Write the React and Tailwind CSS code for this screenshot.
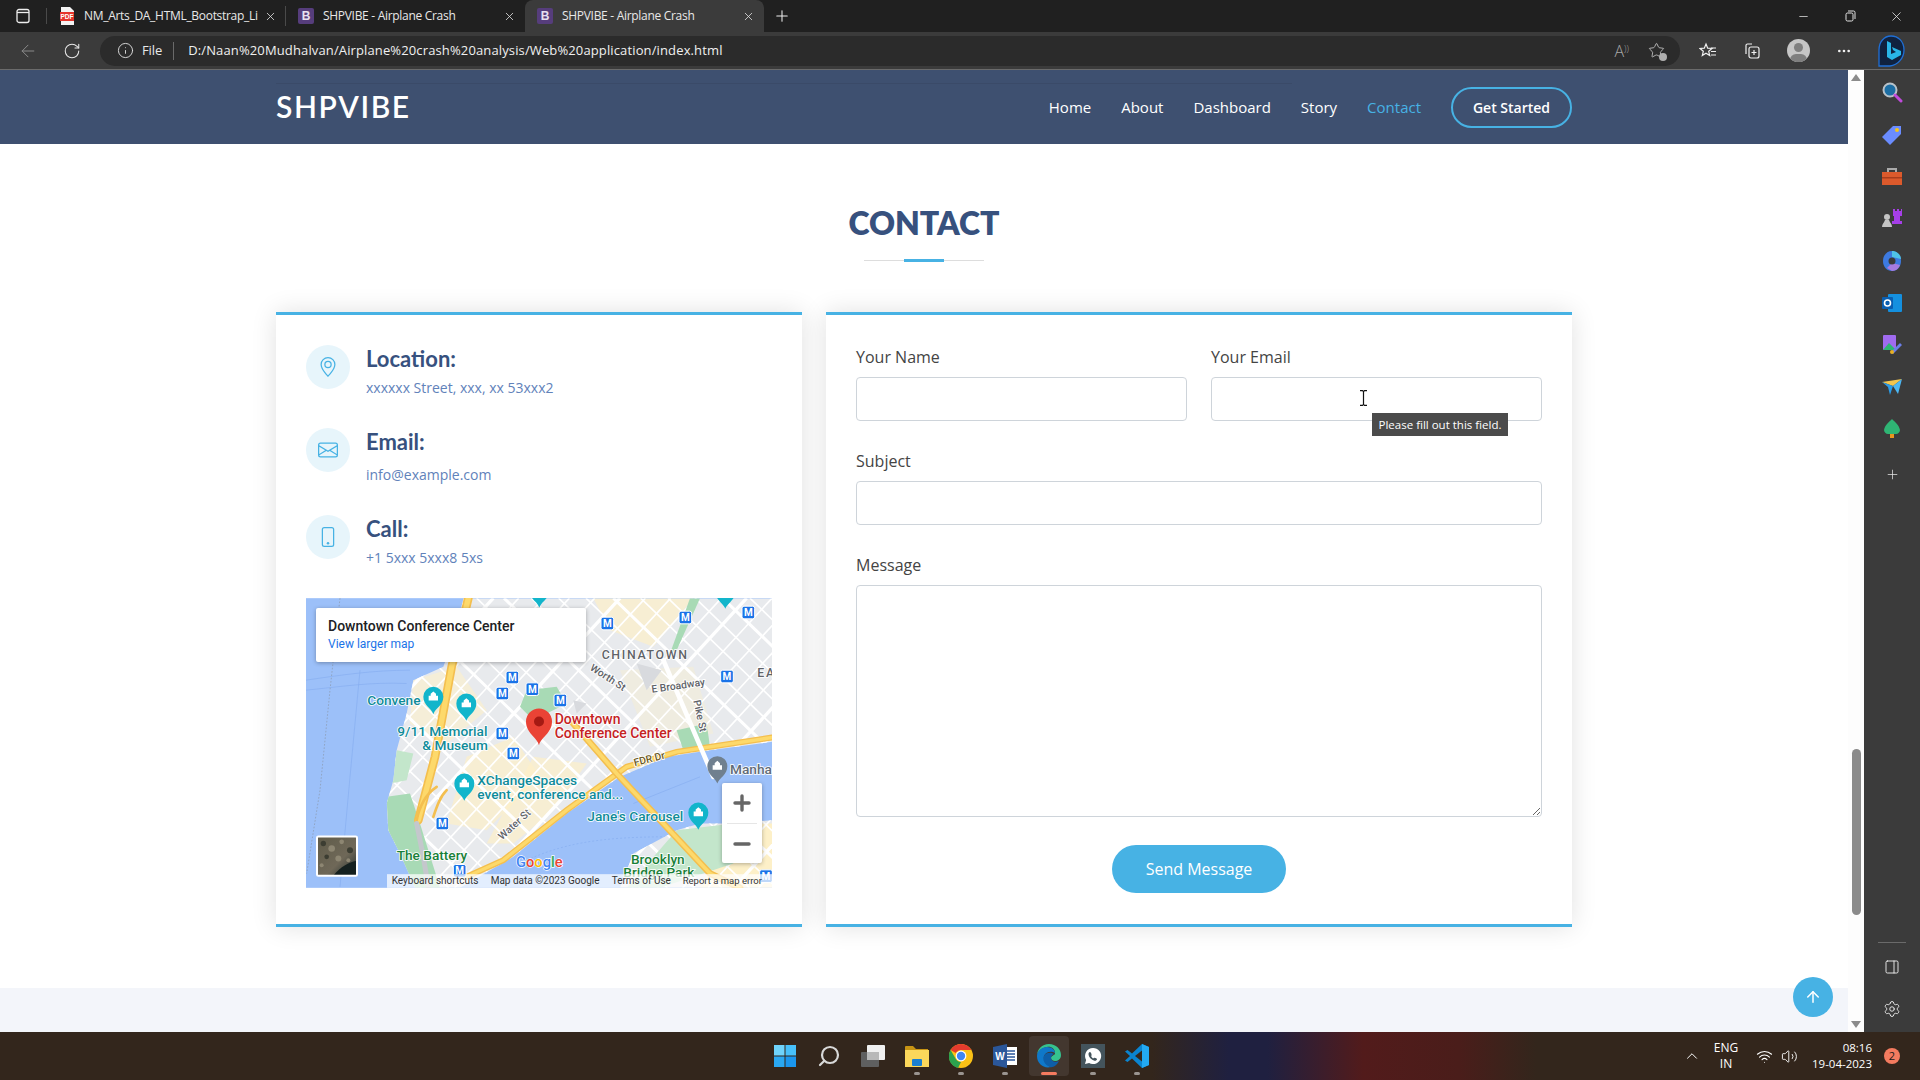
import React from 'react';
import { ArrowLeft, RotateCw, Info, X, Plus, Minus, PanelRight, Settings, ChevronUp, ArrowUp, Wifi, Volume2, MoreHorizontal, Star, Search } from 'lucide-react';
import { BsGeoAlt, BsEnvelope, BsPhone } from 'react-icons/bs';

const NAV = ['Home', 'About', 'Dashboard', 'Story', 'Contact'];

const METRO = [[922, 100], [1156, 82], [1345, 67], [637, 262], [607, 310], [697, 297], [781, 331], [1281, 259], [607, 430], [640, 490], [427, 700], [479, 842], [1398, 858]];

// street grid for the map, in crop coordinates
const STREETS_A = Array.from({ length: 26 }, (_, i) => {
  const o = -700 + i * 82;
  return { d: `M${o} 24L${o + 900} 893`, w: i % 4 === 0 ? 9 : 5 };
});
const STREETS_B = Array.from({ length: 28 }, (_, i) => {
  const o = 200 + i * 76;
  return { d: `M${o} 24L${o - 800} 893`, w: i % 5 === 0 ? 10 : 5 };
});

const SATELLITE_SPOTS = [[70, 760, 8], [95, 775, 10], [125, 755, 7], [150, 780, 9], [80, 800, 7], [115, 805, 9], [145, 810, 6], [65, 825, 6]];

function BrowserTab({ icon, title, active, divider }) {
  return (
    <div className={`relative flex h-[32px] w-[239px] shrink-0 items-center ${active ? 'rounded-t-lg bg-[#3b3b3b]' : ''}`}>
      <div className="ml-[12px] flex w-[16px] justify-center">{icon}</div>
      <span className="ml-[9px] w-[176px] truncate font-['Open_Sans',sans-serif] text-[12px] tracking-[-0.3px] text-[#e8e8e8]">{title}</span>
      <X size={13} strokeWidth={1.5} className="absolute right-[9px] text-[#e0e0e0]" />
      {divider && <span className="absolute right-0 h-[20px] w-px bg-[#4a4a4a]" />}
    </div>
  );
}

function BootstrapBadge() {
  return (
    <span className="flex h-[16px] w-[16px] items-center justify-center rounded-[2px] bg-[#563d7c] font-['Liberation_Sans',sans-serif] text-[12px] font-bold leading-none text-[#e8e0f0]">B</span>
  );
}

function PdfBadge() {
  return (
    <svg width="16" height="18" viewBox="0 0 16 18">
      <path d="M2 0h9l4 4v14H2z" fill="#f3f3f3" />
      <rect x="1" y="5" width="14" height="9" fill="#e5342b" />
      <text x="8" y="12" fontSize="6.5" fontWeight="700" textAnchor="middle" fill="#fff" fontFamily="Liberation Sans">PDF</text>
    </svg>
  );
}

function TabBar() {
  return (
    <div className="flex h-[32px] shrink-0 items-center bg-[#202020]">
      <div className="flex w-[47px] shrink-0 justify-center border-r border-[#4a4a4a]">
        <svg width="16" height="16" viewBox="0 0 16 16" fill="none" stroke="#eee" strokeWidth="1.3"><rect x="2" y="1.5" width="12" height="13" rx="2" /><path d="M2 4.500h12" /></svg>
      </div>
      <BrowserTab divider icon={<PdfBadge />} title="NM_Arts_DA_HTML_Bootstrap_Li" />
      <BrowserTab icon={<BootstrapBadge />} title="SHPVIBE - Airplane Crash" />
      <BrowserTab active icon={<BootstrapBadge />} title="SHPVIBE - Airplane Crash" />
      <Plus size={18} strokeWidth={1.4} className="ml-[9px] text-[#eee]" />
      <div className="ml-auto flex items-center text-[#e4e4e4]">
        <Minus size={13} strokeWidth={1.4} className="mr-[35px]" />
        <svg width="11" height="12" viewBox="0 0 11 12" fill="none" stroke="currentColor" strokeWidth="1" className="mr-[33px]"><rect x="1" y="3" width="7" height="8" rx="1.5" /><path d="M3 1h5.500A1.500 1.500 0 0 1 10 2.500V9" /></svg>
        <X size={15} strokeWidth={1.3} className="mr-[16px]" />
      </div>
    </div>
  );
}

function AddressBar() {
  return (
    <div className="relative flex h-[38px] shrink-0 items-center border-b border-[#6b6b6b] bg-[#3b3b3b]">
      <ArrowLeft size={20} strokeWidth={1.2} className="ml-[18px] text-[#8a8a8a]" />
      <RotateCw size={18} strokeWidth={1.4} className="ml-[25px] text-[#e8e8e8]" />
      <div className="ml-[19px] flex h-[30px] w-[1580px] items-center rounded-full bg-[#2b2b2b]">
        <Info size={17} strokeWidth={1.3} className="ml-[17px] text-[#e0e0e0]" />
        <span className="ml-[8px] font-['Open_Sans',sans-serif] text-[13px] tracking-[-0.1px] text-[#e8e8e8]">File</span>
        <span className="ml-[11px] h-[18px] w-px bg-[#6a6a6a]" />
        <span className="ml-[14px] font-['Open_Sans',sans-serif] text-[13px] tracking-[0.13px] text-[#f0f0f0]">D:/Naan%20Mudhalvan/Airplane%20crash%20analysis/Web%20application/index.html</span>
        <span className="ml-auto font-['Open_Sans',sans-serif] text-[16px] font-light leading-none text-[#a8a8a8]">A<sup className="text-[9px]">))</sup></span>
        <span className="relative ml-[19px] mr-[15px]">
          <Star size={17} strokeWidth={1.2} className="text-[#c8c8c8]" />
          <span className="absolute -bottom-[2px] -right-[2px] h-[8px] w-[8px] rounded-full bg-[#b0b0b0]" />
        </span>
      </div>
      {/* favourites */}
      <svg width="18" height="18" viewBox="0 0 18 18" className="ml-[19px]" fill="none" stroke="#f0f0f0" strokeWidth="1.2"><path d="M7 2l1.700 4.200 4.300.3-3.300 2.800 1 4.300L7 11.300 3.300 13.600l1-4.300L1 6.500l4.300-.3z" /><path d="M12 6h5M12 9.500h5M12 13h5" /></svg>
      {/* collections */}
      <svg width="18" height="18" viewBox="0 0 18 18" className="ml-[26px]" fill="none" stroke="#f0f0f0" strokeWidth="1.2"><path d="M3 12V3.500A1.500 1.500 0 0 1 4.500 2H9" /><rect x="6" y="5" width="10" height="11" rx="2" /><path d="M11 8v5M8.500 10.500h5" /></svg>
      <div className="relative ml-[26px] h-[23px] w-[23px] overflow-hidden rounded-full bg-[#c6c6c6]">
        <span className="absolute left-[7px] top-[4px] h-[9px] w-[9px] rounded-full bg-[#7f7f7f]" />
        <span className="absolute left-[3px] top-[15px] h-[12px] w-[17px] rounded-full bg-[#7f7f7f]" />
      </div>
      <MoreHorizontal size={16} className="ml-[26px] text-[#f0f0f0]" />
      <svg width="30" height="36" viewBox="0 0 30 36" className="ml-[24px] mt-[2px]">
        <path d="M15 2c7 0 13 5 13 14 0 8-6 15-14 16H3V16C3 8 8 2 15 2z" fill="#10223f" stroke="#1f6fd6" strokeWidth="1.3" />
        <path d="M11 7l4 2v11l5-2-3-2-1-3 9 4v4l-9 5-5-3z" fill="#29b6e8" />
      </svg>
    </div>
  );
}

function NavBar() {
  return (
    <header className="relative h-[74px] shrink-0 bg-[#3e5070]">
      <div className="absolute left-[276px] top-[13px] h-px w-[1016px] bg-[#3a4a68]" />
      <div className="mx-auto flex h-full w-[1296px] items-center">
        <span className="mb-[2px] font-['Lato',sans-serif] text-[30px] font-semibold tracking-[1.6px] text-white">SHPVIBE</span>
        <nav className="ml-auto flex items-center gap-[30px] font-['Open_Sans',sans-serif] text-[15px] font-medium text-white">
          {NAV.map((item) => (
            <a key={item} className={item === 'Contact' ? 'text-[#47b2e4]' : ''}>{item}</a>
          ))}
          <a className="flex h-[41px] w-[121px] items-center justify-center rounded-full border-2 border-[#47b2e4] text-[14px] font-semibold">Get Started</a>
        </nav>
      </div>
    </header>
  );
}

function MetroBadge({ x, y }) {
  return (
    <g>
      <rect x={x - 19} y={y - 19} width="38" height="38" rx="6" fill="#1a73e8" stroke="#fff" strokeWidth="3" />
      <text x={x} y={y + 11} fontSize="30" fontWeight="700" textAnchor="middle" fill="#fff">M</text>
    </g>
  );
}

function PoiPin({ x, y, color = '#12b5cb' }) {
  return (
    <g>
      <path d={`M${x} ${y + 54}c-6-18-30-26-30-52a30 30 0 0 1 60 0c0 26-24 34-30 52z`} fill={color} />
      <path d={`M${x - 14} ${y + 13}v-14h6v-6l8-7 8 7v6h6v14z`} fill="#fff" />
    </g>
  );
}

function MapLabel({ x, y, children, color = '#0f8b99', size = 41, ...rest }) {
  return (
    <text x={x} y={y} fontSize={size} fill={color} stroke="#fff" strokeWidth="5" paintOrder="stroke" fontWeight="500" {...rest}>{children}</text>
  );
}

function MapDrawing() {
  return (
    <svg viewBox="18 24 1398 869" className="block h-[290px] w-[466px]" fontFamily="Roboto, sans-serif">
      <defs>
        <clipPath id="land">
          <path d="M490 24L470 120L430 230L340 270L320 370L290 480L280 570L260 640L265 720L300 790L345 893H480L640 800L800 670L960 560L1100 500L1230 480L1416 455V24Z" />
          <path d="M1416 690L1290 700L1200 700L1130 720L1000 790L960 893H1416Z" />
        </clipPath>
        <clipPath id="thumb"><rect x="51" y="739" width="120" height="118" rx="4" /></clipPath>
        <linearGradient id="aerial" x1="0" y1="0" x2="1" y2="1">
          <stop offset="0" stopColor="#5f5b49" />
          <stop offset="0.6" stopColor="#6f6858" />
          <stop offset="1" stopColor="#1d2a2a" />
        </linearGradient>
      </defs>
      <rect x="18" y="24" width="1398" height="869" fill="#9cc0f9" />
      <g stroke="#86aef0" strokeWidth="2" fill="none">
        <path d="M120 24L90 300L60 600L20 850" strokeDasharray="5 5" stroke="#8a97ab" />
        <path d="M18 270C120 255 220 240 330 240" />
        <path d="M18 300C120 290 210 275 320 280" />
        <path d="M180 240L150 560L120 890" />
        <path d="M660 820C780 760 900 740 1100 740" strokeDasharray="6 6" />
        <path d="M1000 640L1200 560" />
      </g>
      <g clipPath="url(#land)">
        <rect x="18" y="24" width="1398" height="869" fill="#e8eaed" />
        <path d="M500 500L640 440L720 560L560 720L440 700Z" fill="#fdf0c8" opacity="0.7" />
        <path d="M340 270L470 230L560 360L430 470L330 400Z" fill="#fbf0cf" opacity="0.7" />
        <path d="M880 24L1180 24L1060 170L930 120Z" fill="#fdf0c8" opacity="0.7" />
        <path d="M960 240L1180 230L1240 430L1050 470Z" fill="#fdf0c8" opacity="0.35" />
        <path d="M700 500L860 520L760 660L640 760L560 760Z" fill="#fdf0c8" opacity="0.7" />
        <path d="M1300 700H1416V893H1200Z" fill="#fdf0c8" />
        <g stroke="#fff" fill="none">
          {STREETS_A.map((s) => <path key={s.d} d={s.d} strokeWidth={s.w} />)}
          {STREETS_B.map((s) => <path key={s.d} d={s.d} strokeWidth={s.w} />)}
        </g>
        <path d="M680 300L770 290L800 340L700 390L660 350Z" fill="#a8dab5" />
        <path d="M1130 180L1200 24L1170 24L1110 190Z" fill="#a8dab5" />
        <path d="M1130 420L1220 400L1230 470L1150 480Z" fill="#a8dab5" />
        <path d="M260 620L330 610L360 700L420 893H345L265 740Z" fill="#a8dab5" />
        <path d="M290 480L340 490L320 570L270 580Z" fill="#c3e6cb" />
        <path d="M1130 720L1300 700L1300 820L1080 893H980Z" fill="#c3e6cb" />
        <path d="M1010 220L1085 240L1040 300Z" fill="#d8dade" />
        <path d="M820 330L860 340L830 370Z" fill="#d8dade" />
      </g>
      <g fill="none" strokeLinecap="round">
        <path d="M355 690L405 500L455 230L505 24" stroke="#f4bf4f" strokeWidth="26" />
        <path d="M355 690L405 500L455 230L505 24" stroke="#fdd96b" strokeWidth="16" />
        <path d="M410 590C380 610 360 640 350 690M440 600C420 620 410 650 400 680" stroke="#f4bf4f" strokeWidth="8" />
        <path d="M350 700L370 800L385 890" stroke="#c4c7cc" strokeWidth="15" />
        <path d="M1416 442L1130 485L980 530L800 660L610 810L500 860" stroke="#f4bf4f" strokeWidth="18" />
        <path d="M1416 442L1130 485L980 530L800 660L610 810L500 860" stroke="#fdd96b" strokeWidth="10" />
        <path d="M820 400L950 550L1230 850L1320 893" stroke="#f4bf4f" strokeWidth="20" />
        <path d="M820 400L950 550L1230 850L1320 893" stroke="#fdd96b" strokeWidth="11" />
        <path d="M1090 210L1240 560" stroke="#fff" strokeWidth="14" />
      </g>
      {METRO.map(([x, y]) => <MetroBadge key={`${x}-${y}`} x={x} y={y} />)}
      <PoiPin x={400} y={318} />
      <PoiPin x={499} y={338} />
      <PoiPin x={493} y={578} />
      <PoiPin x={1195} y={665} />
      <PoiPin x={718} y={-2} />
      <PoiPin x={1276} y={2} />
      <PoiPin x={1252} y={526} color="#70808f" />
      <MapLabel x={202} y={346}>Convene</MapLabel>
      <MapLabel x={292} y={438}>9/11 Memorial</MapLabel>
      <MapLabel x={367} y={480}>& Museum</MapLabel>
      <MapLabel x={532} y={585}>XChangeSpaces</MapLabel>
      <MapLabel x={532} y={627}>event, conference and...</MapLabel>
      <MapLabel x={862} y={693}>Jane's Carousel</MapLabel>
      <MapLabel x={290} y={810} color="#188038">The Battery</MapLabel>
      <MapLabel x={993} y={822} color="#188038">Brooklyn</MapLabel>
      <MapLabel x={970} y={862} color="#188038">Bridge Park</MapLabel>
      <MapLabel x={1290} y={552} color="#5f6b78">Manha</MapLabel>
      <MapLabel x={905} y={208} color="#5f6368" size={37} letterSpacing="5">CHINATOWN</MapLabel>
      <MapLabel x={1372} y={262} color="#5f6368" size={37} letterSpacing="5">EA</MapLabel>
      <MapLabel x={868} y={238} color="#5f6368" size={31} transform="rotate(33 868 238)">Worth St</MapLabel>
      <MapLabel x={1056} y={308} color="#5f6368" size={31} transform="rotate(-8 1056 308)">E Broadway</MapLabel>
      <MapLabel x={1180} y={332} color="#5f6368" size={31} transform="rotate(78 1180 332)">Pike St</MapLabel>
      <MapLabel x={1004} y={528} color="#6b5a1f" size={31} transform="rotate(-14 1004 528)">FDR Dr</MapLabel>
      <MapLabel x={606} y={750} color="#5f6368" size={31} transform="rotate(-42 606 750)">Water St</MapLabel>
      <MapLabel x={764} y={402} color="#c5221f" size={42}>Downtown</MapLabel>
      <MapLabel x={764} y={444} color="#c5221f" size={42}>Conference Center</MapLabel>
      <path d="M717 465c-6-24-39-36-39-71a39 39 0 0 1 78 0c0 35-33 47-39 71z" fill="#ea4335" />
      <circle cx="717" cy="394" r="15" fill="#a51a13" />
      <text x="648" y="830" fontSize="44" fontWeight="500" stroke="#fff" strokeWidth="4" paintOrder="stroke">
        <tspan fill="#4285f4">G</tspan><tspan fill="#ea4335">o</tspan><tspan fill="#fbbc04">o</tspan><tspan fill="#4285f4">g</tspan><tspan fill="#34a853">l</tspan><tspan fill="#ea4335">e</tspan>
      </text>
      <rect x="261" y="852" width="1155" height="41" fill="#fff" opacity="0.72" />
      <g fontSize="30" fill="#333">
        <text x="275" y="882">Keyboard shortcuts</text>
        <text x="572" y="882">Map data ©2023 Google</text>
        <text x="935" y="882">Terms of Use</text>
        <text x="1148" y="882" fontSize="28.500">Report a map error</text>
      </g>
      <g clipPath="url(#thumb)">
        <rect x="51" y="739" width="120" height="118" fill="url(#aerial)" />
        {SATELLITE_SPOTS.map(([x, y, r]) => <circle key={`${x}-${y}`} cx={x} cy={y} r={r} fill={x % 2 ? '#8d8672' : '#3c3d32'} />)}
        <path d="M100 857C120 830 150 815 171 812V857Z" fill="#14201f" />
      </g>
      <rect x="51" y="739" width="120" height="118" rx="4" fill="none" stroke="#fff" strokeWidth="6" />
    </svg>
  );
}

function MapCard() {
  return (
    <div className="relative h-[290px] w-[466px] overflow-hidden">
      <MapDrawing />
      <div className="absolute left-[10px] top-[10px] flex h-[54px] w-[270px] flex-col justify-center rounded-[2px] bg-white pl-[12px] font-['Roboto',sans-serif] shadow-[0_1px_4px_rgba(0,0,0,0.3)]">
        <span className="text-[14px] font-medium leading-[18px] text-[#202124]">Downtown Conference Center</span>
        <span className="text-[12px] leading-[18px] text-[#1a73e8]">View larger map</span>
      </div>
      <div className="absolute left-[416px] top-[185px] flex h-[80px] w-[40px] flex-col items-center rounded-[2px] bg-white shadow-[0_1px_4px_rgba(0,0,0,0.3)]">
        <Plus size={24} strokeWidth={3.4} className="mt-[8px] text-[#666]" />
        <span className="mt-[8px] h-px w-[30px] bg-[#e6e6e6]" />
        <Minus size={24} strokeWidth={3.4} className="mt-[8px] text-[#666]" />
      </div>
    </div>
  );
}

function InfoRow({ icon, title, text, gap, rowClass }) {
  return (
    <div className={`flex gap-[16px] ${rowClass}`}>
      <div className="flex h-[44px] w-[44px] shrink-0 items-center justify-center rounded-full bg-[#e7f5fb] text-[20px] text-[#47b2e4]">{icon}</div>
      <div>
        <h4 className="font-['Lato',sans-serif] text-[22px] font-bold leading-[28px] text-[#37517e]">{title}</h4>
        <p className={`font-['Open_Sans',sans-serif] text-[14px] leading-[21px] text-[#6182ba] ${gap}`}>{text}</p>
      </div>
    </div>
  );
}

function InfoCard() {
  return (
    <div className="w-[526px] border-y-[3px] border-[#47b2e4] bg-white px-[30px] pt-[30px] shadow-[0_0_24px_rgba(0,0,0,0.12)]">
      <InfoRow icon={<BsGeoAlt />} title="Location:" text="xxxxxx Street, xxx, xx 53xxx2" gap="mt-[4px]" rowClass="h-[83px]" />
      <InfoRow icon={<BsEnvelope />} title="Email:" text="info@example.com" gap="mt-[8px]" rowClass="h-[87px]" />
      <InfoRow icon={<BsPhone />} title="Call:" text="+1 5xxx 5xxx8 5xs" gap="mt-[4px]" rowClass="h-[83px]" />
      <MapCard />
    </div>
  );
}

function Field({ label, children }) {
  return (
    <label className="block flex-1">
      <span className="mb-[8px] block font-['Open_Sans',sans-serif] text-[16px] leading-[24px] text-[#444]">{label}</span>
      {children}
    </label>
  );
}

function ContactForm() {
  const inputCls = 'block h-[44px] w-full rounded-[4px] border border-[#ced4da] bg-white outline-none';
  return (
    <form className="relative w-[746px] border-y-[3px] border-[#47b2e4] bg-white px-[30px] pt-[30px] shadow-[0_0_24px_rgba(0,0,0,0.12)]">
      <div className="flex gap-[24px]">
        <Field label="Your Name"><input className={inputCls} /></Field>
        <Field label="Your Email"><input className={inputCls} /></Field>
      </div>
      <div className="mt-[28px]"><Field label="Subject"><input className={inputCls} /></Field></div>
      <div className="mt-[28px]">
        <Field label="Message">
          <textarea className="block h-[232px] w-full rounded-[4px] border border-[#ced4da] bg-white outline-none" />
        </Field>
      </div>
      <div className="mt-[28px] flex justify-center">
        <button type="button" className="h-[48px] w-[174px] rounded-full bg-[#47b2e4] font-['Open_Sans',sans-serif] text-[16px] text-white">Send Message</button>
      </div>
      {/* native validation bubble and mouse cursor */}
      <div className="absolute left-[546px] top-[98px] flex h-[23px] w-[136px] items-center justify-center bg-[#4b4b4b] font-['Open_Sans',sans-serif] text-[11.5px] text-white">Please fill out this field.</div>
      <svg width="9" height="16" viewBox="0 0 9 16" className="absolute left-[533px] top-[75px]" fill="none" stroke="#111" strokeWidth="1.2"><path d="M1 .6h2.500L4.500 1.600 5.500.6H8M4.500 1.600v12.800M1 15.400h2.500l1-1 1 1H8" /></svg>
    </form>
  );
}

function PageBody() {
  return (
    <div className="relative flex min-w-0 flex-1 flex-col">
      <NavBar />
      <main className="flex-1 bg-white">
        <div className="pt-[60px]">
          <h2 className="text-center font-['Lato',sans-serif] text-[32px] font-extrabold leading-[38px] text-[#37517e]">CONTACT</h2>
          <div className="relative mx-auto mt-[18px] h-px w-[120px] bg-[#ddd]">
            <span className="absolute -top-px left-[40px] h-[3px] w-[40px] bg-[#47b2e4]" />
          </div>
        </div>
        <div className="mx-auto mt-[51px] flex h-[615px] w-[1296px] gap-[24px]">
          <InfoCard />
          <ContactForm />
        </div>
      </main>
      <div className="h-[44px] shrink-0 bg-[#f3f5fa]" />
      <button type="button" className="absolute bottom-[15px] right-[15px] flex h-[40px] w-[40px] items-center justify-center rounded-full bg-[#47b2e4] text-white">
        <ArrowUp size={18} strokeWidth={2} />
      </button>
    </div>
  );
}

function Scrollbar() {
  return (
    <div className="flex w-[16px] shrink-0 flex-col items-center bg-[#fdfdfd] pt-[4px] pb-[4px]">
      <span className="h-0 w-0 border-x-[5px] border-b-[7px] border-x-transparent border-b-[#8b8b8b]" />
      <span className="mt-[668px] h-[166px] w-[9px] rounded-full bg-[#8b8b8b]" />
      <span className="mt-auto h-0 w-0 border-x-[5px] border-t-[7px] border-x-transparent border-t-[#8b8b8b]" />
    </div>
  );
}

function SideRail() {
  return (
    <aside className="flex w-[56px] shrink-0 flex-col items-center bg-[#3b3b3b] pt-[11px]">
      <svg width="22" height="22" viewBox="0 0 22 22"><circle cx="9" cy="9" r="6.500" fill="#1c6ea4" stroke="#b9c2c9" strokeWidth="2" /><path d="M14 14l6 6" stroke="#c04bdc" strokeWidth="3" strokeLinecap="round" /></svg>
      <svg width="22" height="22" viewBox="0 0 22 22" className="mt-[21px]"><path d="M12 2h8v8L9 21 1 13z" fill="#6a8cff" /><circle cx="16" cy="6" r="2" fill="#f5c518" /></svg>
      <svg width="22" height="20" viewBox="0 0 22 20" className="mt-[21px]"><path d="M7 5V2h8v3" fill="none" stroke="#aaa" strokeWidth="2" /><rect x="1" y="5" width="20" height="13" fill="#dc5a2c" /><rect x="1" y="10" width="20" height="1.500" fill="#a83d1c" /></svg>
      <svg width="22" height="22" viewBox="0 0 22 22" className="mt-[19px]"><path d="M12 3h2v2h2V3h2v2h2V3h1v7h-2v5h2v3H11v-3h2v-5h-1z" fill="#a63fe8" /><circle cx="6" cy="11" r="3" fill="#c4c4c4" /><path d="M1 21c0-3 2-4 3-7h4c1 3 3 4 3 7z" fill="#c4c4c4" /></svg>
      <svg width="20" height="22" viewBox="0 0 20 22" className="mt-[22px]"><path d="M10 1c5 0 9 4 9 10s-4 10-9 10-9-4-9-10S5 1 10 1z" fill="#3d7ae0" /><path d="M10 1c5 0 9 4 9 8l-9-2z" fill="#4fc3e8" /><path d="M10 21c4 0 7-3 8-6l-8-2-5 5z" fill="#a77be0" /><circle cx="10" cy="11" r="3.500" fill="#3b3b3b" /></svg>
      <svg width="20" height="20" viewBox="0 0 20 20" className="mt-[21px]"><rect x="6" y="1" width="14" height="18" rx="1" fill="#1490df" /><rect x="0" y="4" width="11" height="12" rx="1" fill="#0a5eb0" /><circle cx="5.500" cy="10" r="3" fill="none" stroke="#fff" strokeWidth="1.600" /></svg>
      <svg width="22" height="22" viewBox="0 0 22 22" className="mt-[21px]"><rect x="2" y="1" width="13" height="15" rx="1" fill="#a06bf0" /><path d="M2 16l6-7 7 7z" fill="#2fb574" /><path d="M10 18l9-9 2 2-9 9z" fill="#6b7fe8" /><circle cx="11" cy="18" r="2" fill="#e8b020" /></svg>
      <svg width="20" height="16" viewBox="0 0 20 16" className="mt-[23px]"><path d="M0 3l20-3-9 7z" fill="#f3c64f" /><path d="M0 3l6 5 2 8 3-9z" fill="#2b9ce8" /><path d="M20 0l-9 7 5 8z" fill="#4cb8f5" /></svg>
      <svg width="18" height="20" viewBox="0 0 18 20" className="mt-[24px]"><path d="M9 0c3 3 7 6 8 11 0 2-2 4-4 4H5c-2 0-4-2-4-4 1-5 5-8 8-11z" fill="#2fb574" /><rect x="7" y="15" width="4" height="4" fill="#e8961e" /></svg>
      <Plus size={15} strokeWidth={1.2} className="mt-[28px] text-[#e6e6e6]" />
      <span className="mt-auto h-px w-[28px] bg-[#6a6a6a]" />
      <PanelRight size={16} strokeWidth={1.4} className="mt-[16px] text-[#eee]" />
      <Settings size={18} strokeWidth={1.3} className="mb-[14px] mt-[25px] text-[#e6e6e6]" />
    </aside>
  );
}

function TaskIcon({ children, active, dot }) {
  return (
    <div className={`relative flex h-[40px] w-[40px] items-center justify-center rounded-[4px] ${active ? 'bg-[#43372f]' : ''}`}>
      {children}
      {dot && <span className="absolute bottom-[1px] left-[17px] h-[3px] w-[6px] rounded-full bg-[#9a9490]" />}
      {active && <span className="absolute bottom-[1px] left-[12px] h-[3px] w-[16px] rounded-full bg-[#f47b5f]" />}
    </div>
  );
}

function Taskbar() {
  return (
    <footer className="relative flex h-[48px] shrink-0 items-center bg-[linear-gradient(90deg,#33261c_0%,#33261c_60%,#1f2040_64%,#1f2040_66%,#521b1b_71%,#4a1d1a_76%,#33261c_80%)]">
      <div className="ml-[765px] flex items-center gap-[4px]">
        <TaskIcon>
          <svg width="24" height="24" viewBox="0 0 24 24"><path d="M1 1h10.500v10.500H1z" fill="#6fd3fb" /><path d="M12.500 1H23v10.500H12.500z" fill="#47c0fa" /><path d="M1 12.500h10.500V23H1z" fill="#2aa8f2" /><path d="M12.500 12.500H23V23H12.500z" fill="#1a96ee" /></svg>
        </TaskIcon>
        <TaskIcon>
          <Search size={24} strokeWidth={2.2} className="-scale-x-100 text-[#d8d8d8]" />
        </TaskIcon>
        <TaskIcon>
          <svg width="24" height="22" viewBox="0 0 24 22"><rect x="0" y="7" width="18" height="15" rx="1" fill="#5f5f5f" /><rect x="6" y="0" width="18" height="15" rx="1" fill="#f0f0f0" /><rect x="6" y="7" width="12" height="8" fill="#b8b8b8" /></svg>
        </TaskIcon>
        <TaskIcon dot>
          <svg width="24" height="22" viewBox="0 0 24 22"><path d="M0 2a1 1 0 0 1 1-1h7l3 3h12v17H0z" fill="#c89414" /><path d="M0 5h24v17H0z" fill="#fbd75b" /><rect x="7" y="14" width="10" height="7" rx="1" fill="#1a7fd0" /></svg>
        </TaskIcon>
        <TaskIcon dot>
          <svg width="24" height="24" viewBox="0 0 24 24"><circle cx="12" cy="12" r="12" fill="#fbc116" /><path d="M12 0a12 12 0 0 1 10.400 6H12a6 6 0 0 0-5.200 3L1.600 6A12 12 0 0 1 12 0z" fill="#e33b2e" /><path d="M1.600 6l5.200 9a6 6 0 0 0 5.200 3L9 24A12 12 0 0 1 1.600 6z" fill="#2ca24e" /><circle cx="12" cy="12" r="5.400" fill="#fff" /><circle cx="12" cy="12" r="4.200" fill="#3f86f4" /></svg>
        </TaskIcon>
        <TaskIcon dot>
          <svg width="24" height="24" viewBox="0 0 24 24"><path d="M8 3h16v18H8z" fill="#fff" /><path d="M13 7h9M13 10h9M13 13h9M13 16h9" stroke="#2b579a" strokeWidth="1.400" /><path d="M0 3l14-3v24L0 21z" fill="#2b579a" /><text x="7" y="16" fontSize="10" fontWeight="700" textAnchor="middle" fill="#fff" fontFamily="Liberation Sans">W</text></svg>
        </TaskIcon>
        <TaskIcon active>
          <svg width="24" height="24" viewBox="0 0 24 24"><path d="M12 0c7 0 12 5 12 11 0 4-3 6-6 6-2 0-4-1-4-3 0-3 4-2 4-5 0-4-4-7-8-6C4 4 0 8 0 12 0 5 5 0 12 0z" fill="#35c28f" /><path d="M0 12c0-5 5-9 10-9 5 0 8 3 8 6-3-2-9-2-11 3-1 4 2 9 7 11-7 2-14-3-14-11z" fill="#0f78c9" /><path d="M7 12c2-4 7-4 10-2-2 1-3 2-3 4 0 3 4 5 8 3-2 4-6 7-9 6-5-2-8-7-6-11z" fill="#0d5ea8" /></svg>
        </TaskIcon>
        <TaskIcon dot>
          <div className="flex h-[24px] w-[24px] items-center justify-center bg-[#44545c]">
            <svg width="18" height="18" viewBox="0 0 18 18"><path d="M9 1a8 8 0 0 0-6.900 12L1 17l4.100-1.100A8 8 0 1 0 9 1z" fill="#fff" /><path d="M6 5c1 0 2 3 1.500 3.500-.5.7-.3 1 .5 2 1 1 1.500 1 2 .5.7-.7 3 .5 3 1.200 0 1-1.500 1.800-2.500 1.500C7.500 13 4.500 10 4.500 7 4.500 6 5 5 6 5z" fill="#44545c" /></svg>
          </div>
        </TaskIcon>
        <TaskIcon dot>
          <svg width="24" height="24" viewBox="0 0 24 24"><path d="M17 0l7 3v18l-7 3L7 14.500 2.500 18 0 16.500 5 12 0 7.500 2.500 6 7 9.500z" fill="#0a84d0" /><path d="M17 6.500L10 12l7 5.500z" fill="#33261c" /><path d="M17 0l7 3v18l-7 3z" fill="#23a9f2" /></svg>
        </TaskIcon>
      </div>
      <div className="ml-auto flex items-center font-['Open_Sans',sans-serif] text-[12px] leading-[16px] text-white">
        <ChevronUp size={18} strokeWidth={1.3} />
        <div className="ml-[9px] w-[32px] text-center">ENG<br />IN</div>
        <Wifi size={17} strokeWidth={1.5} className="ml-[14px]" />
        <Volume2 size={17} strokeWidth={1.3} className="ml-[8px]" />
        <div className="ml-[4px] w-[70px] text-right text-[11.5px]">08:16<br />19-04-2023</div>
        <span className="ml-[12px] mr-[20px] flex h-[16px] w-[16px] items-center justify-center rounded-full bg-[#f47b5f] text-[11px] text-[#1a1a1a]">2</span>
      </div>
    </footer>
  );
}

export default function App() {
  return (
    <div className="flex h-[1080px] w-[1920px] flex-col overflow-hidden">
      <TabBar />
      <AddressBar />
      <div className="flex min-h-0 flex-1">
        <PageBody />
        <Scrollbar />
        <SideRail />
      </div>
      <Taskbar />
    </div>
  );
}
